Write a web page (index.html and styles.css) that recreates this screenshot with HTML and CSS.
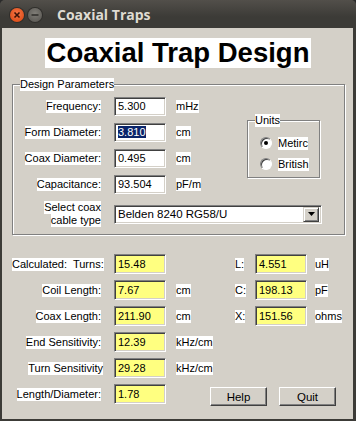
FILE: index.html
```html
<!DOCTYPE html>
<html lang="en">
<head>
    <meta charset="UTF-8">
    <title>Coaxial Traps</title>
    <link rel="stylesheet" href="styles.css">
</head>
<body>

    <div class="window">
        <div class="titlebar">
            <span class="tb-btn close">
                <svg width="14" height="14" viewBox="0 0 14 14"><path d="M4.5 4.5l5 5M9.5 4.5l-5 5" stroke="#3a1206" stroke-width="1.6"/></svg>
            </span>
            <span class="tb-btn min">
                <svg width="14" height="14" viewBox="0 0 14 14"><path d="M3.5 7h7" stroke="#2e2d2a" stroke-width="1.6"/></svg>
            </span>
            <span class="title">Coaxial Traps</span>
        </div>

        <div class="client">
            <div class="heading"><h1>Coaxial Trap Design</h1></div>

            <!-- Design Parameters -->
            <fieldset class="group params">
                <legend><span class="hl">Design Parameters</span></legend>
                <div class="param-grid">
                    <div class="cap"><span class="hl">Frequency:</span></div>
                    <div class="field">5.300</div>
                    <div class="unit"><span class="hl">mHz</span></div>

                    <fieldset class="group units">
                        <legend><span class="hl">Units</span></legend>
                        <div class="radio-row"><span class="radio checked"></span><span class="hl">Metirc</span></div>
                        <div class="radio-row"><span class="radio"></span><span class="hl">British</span></div>
                    </fieldset>

                    <div class="cap"><span class="hl">Form Diameter:</span></div>
                    <div class="field"><span class="sel">3.810</span></div>
                    <div class="unit"><span class="hl">cm</span></div>

                    <div class="cap"><span class="hl">Coax Diameter:</span></div>
                    <div class="field">0.495</div>
                    <div class="unit"><span class="hl">cm</span></div>

                    <div class="cap"><span class="hl">Capacitance:</span></div>
                    <div class="field">93.504</div>
                    <div class="unit"><span class="hl">pF/m</span></div>

                    <div class="cap two"><span class="hl">Select coax</span><span class="hl">cable type</span></div>
                    <div class="select">
                        <span>Belden 8240 RG58/U</span>
                        <span class="drop">
                            <svg width="7" height="4" viewBox="0 0 7 4"><path d="M0 0h7L3.5 4z" fill="#000"/></svg>
                        </span>
                    </div>
                </div>
            </fieldset>

            <!-- Calculated results -->
            <div class="results">
                <div class="cap"><span class="hl pre">Calculated:  Turns:</span></div>
                <div class="field out">15.48</div>
                <div class="unit"></div>
                <div class="cap"><span class="hl">L:</span></div>
                <div class="field out">4.551</div>
                <div class="unit"><span class="hl">uH</span></div>

                <div class="cap"><span class="hl">Coil Length:</span></div>
                <div class="field out">7.67</div>
                <div class="unit"><span class="hl">cm</span></div>
                <div class="cap"><span class="hl">C:</span></div>
                <div class="field out">198.13</div>
                <div class="unit"><span class="hl">pF</span></div>

                <div class="cap"><span class="hl">Coax Length:</span></div>
                <div class="field out">211.90</div>
                <div class="unit"><span class="hl">cm</span></div>
                <div class="cap"><span class="hl">X:</span></div>
                <div class="field out">151.56</div>
                <div class="unit"><span class="hl">ohms</span></div>

                <div class="cap"><span class="hl">End Sensitivity:</span></div>
                <div class="field out">12.39</div>
                <div class="unit wide"><span class="hl">kHz/cm</span></div>

                <div class="cap"><span class="hl">Turn Sensitivity</span></div>
                <div class="field out">29.28</div>
                <div class="unit wide"><span class="hl">kHz/cm</span></div>

                <div class="cap"><span class="hl">Length/Diameter:</span></div>
                <div class="field out">1.78</div>
                <div class="buttons">
                    <button class="btn">Help</button>
                    <button class="btn">Quit</button>
                </div>
            </div>
        </div>
    </div>

</body>
</html>
```

FILE: styles.css
```css
body {
    margin: 0;
    background: #2b2b2b;
    font-family: "Liberation Sans", Arial, sans-serif;
    font-size: 11px;
    color: #000;
}
.window {
    width: 356px;
    height: 421px;
    background: #3c3b37;
    border-radius: 5px 5px 0 0;
    display: flex;
    flex-direction: column;
    overflow: hidden;
}
.titlebar {
    height: 28px;
    flex: none;
    display: flex;
    align-items: center;
    background: linear-gradient(#524f4a, #3c3b37 60%);
}
.tb-btn {
    width: 14px;
    height: 14px;
    border-radius: 50%;
    margin-left: 4px;
    display: flex;
    margin-top: 2px;
}
.tb-btn.close {
    margin-left: 10px;
    background: radial-gradient(circle at 50% 40%, #f47649, #e1521d 70%, #b9401a);
    box-shadow: 0 0 0 1px #2f2e2b;
}
.tb-btn.min {
    background: radial-gradient(circle at 50% 40%, #807e78, #615f5a 70%, #4d4b47);
    box-shadow: 0 0 0 1px #2f2e2b;
}
.title {
    margin-left: 15px;
    margin-top: 1px;
    font-family: "Open Sans", "DejaVu Sans", sans-serif;
    font-weight: bold;
    font-size: 14px;
    color: #dfdbd2;
}
.client {
    flex: 1;
    margin: 0 3px 2px 2px;
    background: #d4d0c8;
    padding-top: 10px;
}
.hl {
    background: #fff;
    line-height: 13px;
    display: inline-block;
}
.pre {
    white-space: pre;
}
.heading {
    text-align: center;
    padding-left: 1px;
}
.heading h1 {
    display: inline-block;
    margin: 0;
    background: #fff;
    font-size: 27.5px;
    line-height: 30px;
    padding: 0 2px;
    font-weight: bold;
}

/* group boxes */
.group {
    margin: 0;
    padding: 0;
    min-width: 0;
    border: 1px solid #808080;
    box-shadow: 1px 1px 0 #fff, inset 1px 1px 0 #fff;
}
.group legend {
    padding: 0;
    line-height: 12px;
    margin-left: 7px;
}
.params {
    margin: 10px 0 0 10px;
    width: 333px;
    box-sizing: border-box;
    padding: 6px 0 7px 0;
}
.param-grid {
    display: grid;
    grid-template-columns: 101px 62px 71px 75px;
    grid-template-rows: 19px 19px 19px 19px 26px;
    row-gap: 7px;
    align-items: center;
}
.cap {
    text-align: right;
    padding-right: 13px;
}
.param-grid .cap {
    grid-column: 1;
}
.cap.two {
    display: flex;
    flex-direction: column;
    align-items: flex-end;
}
.field {
    width: 52px;
    height: 19px;
    box-sizing: border-box;
    background: #fff;
    border: 1px solid;
    border-color: #808080 #fff #fff #808080;
    box-shadow: inset 1px 1px 0 #404040, inset -1px -1px 0 #d4d0c8;
    padding-left: 3px;
    line-height: 17px;
    white-space: nowrap;
}
.field.out {
    background: #ffff80;
    height: 20px;
    line-height: 18px;
}
.sel {
    background: #0a246a;
    color: #fff;
}
.unit {
    white-space: nowrap;
}

/* units box */
.units {
    grid-column: 4;
    grid-row: 1 / span 3;
    align-self: start;
    margin-top: 17px;
    width: 73px;
    height: 64px;
    box-sizing: border-box;
    padding-top: 10px;
}
.radio-row {
    display: flex;
    align-items: center;
    gap: 6px;
    height: 12px;
    margin-bottom: 9px;
    padding-left: 12px;
}
.radio {
    width: 12px;
    height: 12px;
    box-sizing: border-box;
    border-radius: 50%;
    background: #fff;
    border: 1px solid;
    border-color: #808080 #fff #fff #808080;
    box-shadow: inset 1px 1px 0 #404040;
    display: flex;
    align-items: center;
    justify-content: center;
}
.radio.checked::after {
    content: "";
    width: 4px;
    height: 4px;
    border-radius: 50%;
    background: #000;
}

/* combo box */
.select {
    grid-column: 2 / span 3;
    height: 19px;
    box-sizing: border-box;
    background: #fff;
    border: 1px solid;
    border-color: #808080 #fff #fff #808080;
    box-shadow: inset 1px 1px 0 #404040, inset -1px -1px 0 #d4d0c8;
    padding: 2px 2px 2px 3px;
    display: flex;
    align-items: center;
    justify-content: space-between;
    font-size: 11.5px;
}
.drop {
    width: 16px;
    height: 15px;
    box-sizing: border-box;
    background: #d4d0c8;
    border: 1px solid;
    border-color: #d4d0c8 #404040 #404040 #d4d0c8;
    box-shadow: inset 1px 1px 0 #fff, inset -1px -1px 0 #808080;
    display: flex;
    align-items: center;
    justify-content: center;
}

/* results */
.results {
    display: grid;
    grid-template-columns: 102px 62px 59px 20px 60px 1fr;
    grid-auto-rows: 20px;
    row-gap: 6px;
    align-items: center;
    margin: 19px 0 0 10px;
}
.results .cap:nth-child(6n+4) {
    padding-right: 11px;
}
.unit.wide {
    grid-column: 3 / -1;
}
.buttons {
    grid-column: 3 / -1;
    display: flex;
    gap: 12px;
    padding-left: 34px;
    align-self: end;
    margin-bottom: -2px;
}
.btn {
    width: 57px;
    height: 19px;
    background: #d4d0c8;
    border: 1px solid;
    border-color: #fff #404040 #404040 #fff;
    box-shadow: inset -1px -1px 0 #808080;
    font-family: "Liberation Sans", Arial, sans-serif;
    font-size: 11.5px;
    padding: 0;
    color: #000;
}
```
